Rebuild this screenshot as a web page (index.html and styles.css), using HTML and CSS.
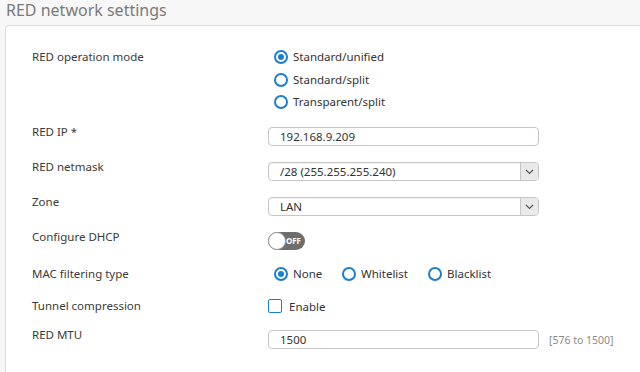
FILE: index.html
```html
<!DOCTYPE html>
<html>
<head>
  <title>RED network settings</title>
  <link rel="stylesheet" href="styles.css">
</head>
<body>
  <h2 class="section-title">RED network settings</h2>
  <div class="panel">
    <div class="row row-tall">
      <div class="label label-radio">RED operation mode</div>
      <div class="radio-list">
        <label class="radio checked"><span class="dot"></span>Standard/unified</label>
        <label class="radio"><span class="dot"></span>Standard/split</label>
        <label class="radio"><span class="dot"></span>Transparent/split</label>
      </div>
    </div>

    <div class="row">
      <div class="label">RED IP *</div>
      <div class="field">192.168.9.209</div>
    </div>

    <div class="row">
      <div class="label">RED netmask</div>
      <div class="field select">/28 (255.255.255.240)
        <span class="arrow">
          <svg width="9" height="6" viewBox="0 0 9 6"><path d="M1 1 L4.5 4.5 L8 1" fill="none" stroke="#555" stroke-width="1.2"/></svg>
        </span>
      </div>
    </div>

    <div class="row">
      <div class="label">Zone</div>
      <div class="field select">LAN
        <span class="arrow">
          <svg width="9" height="6" viewBox="0 0 9 6"><path d="M1 1 L4.5 4.5 L8 1" fill="none" stroke="#555" stroke-width="1.2"/></svg>
        </span>
      </div>
    </div>

    <div class="row">
      <div class="label">Configure DHCP</div>
      <div class="toggle"><span class="knob"></span><span class="toggle-text">OFF</span></div>
    </div>

    <div class="row">
      <div class="label label-radio">MAC filtering type</div>
      <div class="radio-inline">
        <label class="radio checked"><span class="dot"></span>None</label>
        <label class="radio"><span class="dot"></span>Whitelist</label>
        <label class="radio"><span class="dot"></span>Blacklist</label>
      </div>
    </div>

    <div class="row">
      <div class="label label-radio">Tunnel compression</div>
      <label class="check"><span class="box"></span>Enable</label>
    </div>

    <div class="row">
      <div class="label">RED MTU</div>
      <div class="field-wrap">
        <div class="field">1500</div>
        <span class="hint">[576 to 1500]</span>
      </div>
    </div>
  </div>
</body>
</html>
```

FILE: styles.css
```css
body {
  font-family: "Noto Sans", Arial, sans-serif;
  font-size: 11.5px;
  color: #3a3a3a;
  background-color: #f7f7f7;
  margin: 0;
  padding: 0 0 0 5px;
  overflow: hidden;
}

.section-title {
  font-size: 16px;
  font-weight: 400;
  color: #7a7a7a;
  margin: 0;
  padding-left: 1px;
  line-height: 20px;
  height: 25px;
}

.panel {
  background-color: #fff;
  border: 1px solid #dcdcdc;
  border-radius: 4px;
  margin-right: -20px;
  padding: 23px 0 40px 26px;
  display: flex;
  flex-direction: column;
  gap: 16px;
}

.row {
  display: grid;
  grid-template-columns: 236px 1fr;
  align-items: start;
}

.row-tall {
  margin-bottom: 1px;
}

.label {
  line-height: 14px;
  margin-top: -2px;
}

.label-radio {
  margin-top: 1px;
}

.radio-list {
  display: flex;
  flex-direction: column;
  gap: 6.5px;
}

.radio {
  display: flex;
  align-items: center;
  line-height: 16px;
  height: 16px;
  color: #333;
}

.radio .dot {
  width: 10px;
  height: 10px;
  border: 2px solid #1a7fd0;
  border-radius: 50%;
  margin: 0 5px 0 6px;
  position: relative;
  background: #fff;
}

.radio.checked .dot::after {
  content: "";
  position: absolute;
  left: 2px;
  top: 2px;
  width: 6px;
  height: 6px;
  border-radius: 50%;
  background: #1a7fd0;
}

.radio-inline {
  display: flex;
}

.radio-inline .radio:nth-child(1) { width: 68px; }
.radio-inline .radio:nth-child(2) { width: 86px; }

.field {
  width: 258px;
  height: 17px;
  line-height: 17px;
  border: 1px solid #c6c6c6;
  border-radius: 4px;
  padding-left: 11px;
  color: #333;
  position: relative;
}

.select {
  box-shadow: inset 0 1px 1px rgba(0, 0, 0, 0.06);
}

.select .arrow {
  position: absolute;
  right: 0;
  top: 0;
  width: 17px;
  height: 17px;
  background: #e9e9e9;
  border-left: 1px solid #c6c6c6;
  border-radius: 0 3px 3px 0;
  display: flex;
  align-items: center;
  justify-content: center;
}

.toggle {
  width: 37px;
  height: 18px;
  border-radius: 9px;
  background: #6e6e6e;
  position: relative;
}

.toggle .knob {
  position: absolute;
  left: 0;
  top: 0;
  width: 16px;
  height: 16px;
  border: 1px solid #9a9a9a;
  border-radius: 50%;
  background: #fff;
}

.toggle-text {
  position: absolute;
  right: 4px;
  top: 0;
  line-height: 18px;
  font-size: 8px;
  font-weight: bold;
  color: #fff;
}

.check {
  display: flex;
  align-items: center;
  height: 16px;
  color: #333;
}

.check .box {
  width: 12px;
  height: 12px;
  border: 1.5px solid #1a7fd0;
  border-radius: 2px;
  margin-right: 7px;
}

.field-wrap {
  display: flex;
  align-items: center;
  gap: 10px;
}

.hint {
  color: #8a8a8a;
  font-size: 10.5px;
}
```
